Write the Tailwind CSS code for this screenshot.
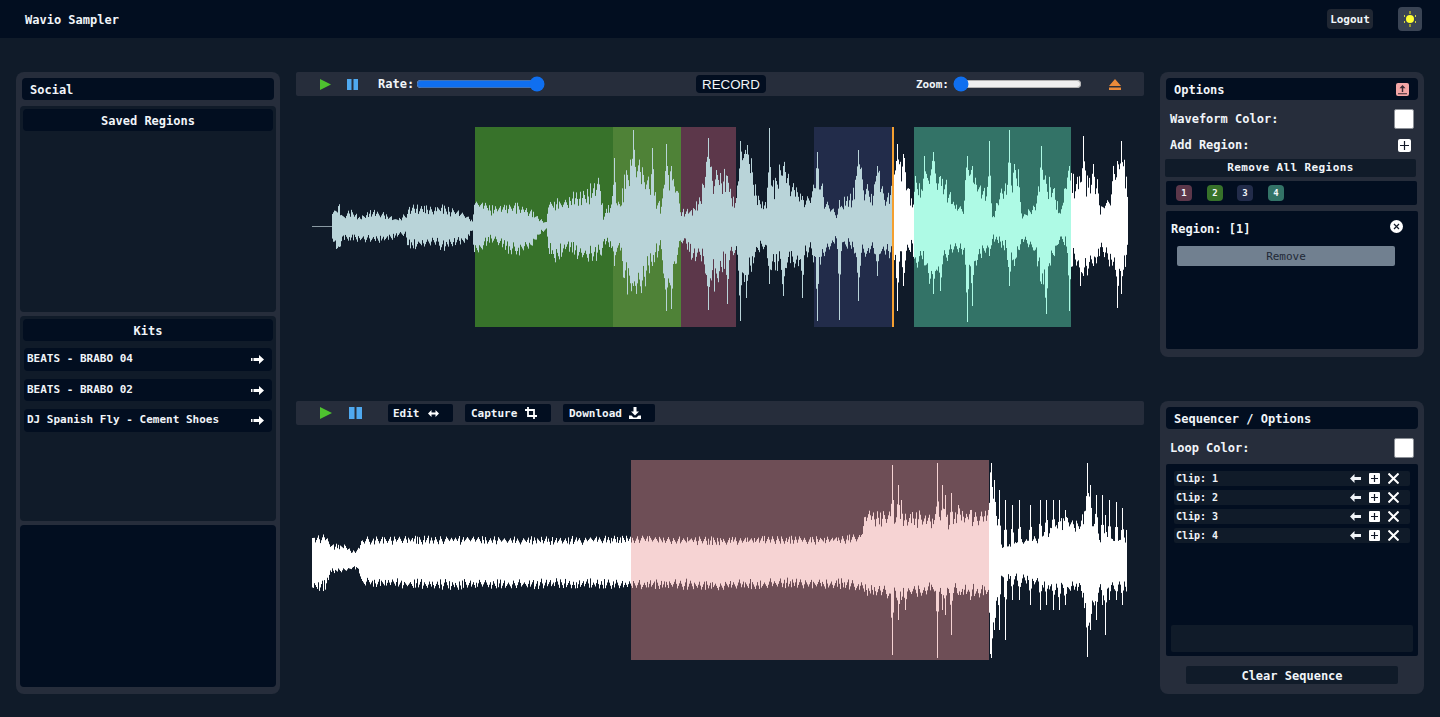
<!DOCTYPE html>
<html lang="en">
<head>
  <meta charset="UTF-8" />
  <title>Wavio Sampler</title>
  <script src="https://cdn.jsdelivr.net/npm/@tailwindcss/browser@4"></script>
</head>
<body class="h-[717px] overflow-hidden bg-[#101b29] text-[#f1f5f9] font-bold text-xs [font-family:'DejaVu_Sans_Mono',monospace]">

  <!-- Header -->
  <header class="h-[38px] bg-[#020e20] flex items-center pl-[25px] pr-[18px]">
    <span class="flex-1 pt-[2px]">Wavio Sampler</span>
    <button class="w-[46px] h-5 pt-[3px] rounded bg-[#202733] text-[11px] font-bold">Logout</button>
    <button class="ml-[25px] w-6 h-6 rounded bg-[#3a4454] flex items-center justify-center">
      <svg width="14" height="16" viewBox="0 0 14 16"><circle cx="7" cy="8" r="4" fill="#ffff33"/><path d="M7 0v3M7 13v3" stroke="#9a9a30" stroke-width="2"/><path d="M1 5h1M12 5h1M1 11h1M12 11h1" stroke="#ffff33" stroke-width="1.5"/></svg>
    </button>
  </header>

  <main class="flex gap-4 px-4 pt-[34px]">

    <!-- Left column -->
    <aside class="w-[264px] h-[622px] rounded-lg bg-[#262d3b] flex flex-col">
      <h2 class="mx-1.5 mt-1.5 h-[22px] pl-2 pt-[2px] rounded bg-[#020e20] flex items-center">Social</h2>
      <div class="mx-1 mt-1.5 h-[206px] rounded bg-[#101b29] p-[3px]">
        <h3 class="h-[22px] pt-[2px] rounded bg-[#020e20] flex items-center justify-center">Saved Regions</h3>
      </div>
      <div class="mx-1 mt-1 h-[205px] rounded bg-[#101b29] p-[3px]">
        <h3 class="h-[22px] pt-[2px] rounded bg-[#020e20] flex items-center justify-center">Kits</h3>
        <ul class="mx-px mt-[7px] text-[11px]">
          <li class="h-[23px] rounded bg-[#020e20] flex items-center justify-between pl-[3px] pr-2">
            <span>BEATS - BRABO 04</span>
            <svg width="13" height="9" viewBox="0 0 13 9" fill="#fff"><path d="M0 3h1.500v3H0zM2.500 3H8V0l5 4.500L8 9V6H2.500z"/></svg>
          </li>
          <li class="mt-2 h-[22px] rounded bg-[#020e20] flex items-center justify-between pl-[3px] pr-2">
            <span>BEATS - BRABO 02</span>
            <svg width="13" height="9" viewBox="0 0 13 9" fill="#fff"><path d="M0 3h1.500v3H0zM2.500 3H8V0l5 4.500L8 9V6H2.500z"/></svg>
          </li>
          <li class="mt-2 h-[23px] rounded bg-[#020e20] flex items-center justify-between pl-[3px] pr-2">
            <span>DJ Spanish Fly - Cement Shoes</span>
            <svg width="13" height="9" viewBox="0 0 13 9" fill="#fff"><path d="M0 3h1.500v3H0zM2.500 3H8V0l5 4.500L8 9V6H2.500z"/></svg>
          </li>
        </ul>
      </div>
      <div class="mx-1 mt-1 h-[162px] rounded bg-[#020e20]"></div>
    </aside>

    <!-- Center column -->
    <section class="w-[848px]">
      <div class="h-6 rounded-[2px] bg-[#262d3b] flex items-center">
        <svg class="ml-6" width="11" height="11" viewBox="0 0 11 11"><path d="M0 0l11 5.500L0 11z" fill="#4ec22f"/></svg>
        <svg class="ml-4" width="11" height="11" viewBox="0 0 11 11" fill="#4fa9f0"><path d="M0 0h4.500v11H0zM6.500 0H11v11H6.500z"/></svg>
        <span class="ml-5">Rate:</span>
        <input type="range" min="0" max="100" value="100" class="ml-0.5 w-[129px] h-4 accent-[#0f6ff0]" />
        <div class="flex-1 flex justify-center pl-[1px]">
          <button class="w-[70px] h-[18px] pt-[1px] rounded bg-[#020e20] text-[13.33px] font-normal [font-family:'Liberation_Sans',sans-serif]">RECORD</button>
        </div>
        <span class="pt-[3px] text-[11px]">Zoom:</span>
        <input type="range" min="0" max="100" value="0" class="ml-1 w-[129px] h-4 accent-[#0f6ff0]" />
        <svg class="ml-[27px] mr-[23px]" width="12" height="11" viewBox="0 0 12 11" fill="#e98a3a"><path d="M6 0l6 7H0zM0 8.500h12V11H0z"/></svg>
      </div>

      <div class="relative mt-[31px] h-[200px]">
        <div class="absolute inset-y-0 left-[179px] w-[138px] bg-[#37722a]"></div>
        <div class="absolute inset-y-0 left-[317px] w-[68px] bg-[#4f8237]"></div>
        <div class="absolute inset-y-0 left-[385px] w-[55px] bg-[#5c374a]"></div>
        <div class="absolute inset-y-0 left-[518px] w-[78px] bg-[#222c4a]"></div>
        <div class="absolute inset-y-0 left-[618px] w-[157px] bg-[#337367]"></div>
        <canvas id="waveTop" width="848" height="200" class="absolute inset-0"></canvas>
        <div class="absolute inset-y-0 left-[596px] w-0.5 bg-[#f5a030]"></div>
      </div>

      <div class="mt-[74px] h-6 rounded-[2px] bg-[#262d3b] flex items-center text-[11px]">
        <svg class="ml-6" width="12" height="12" viewBox="0 0 12 12"><path d="M0 0l12 6L0 12z" fill="#4ec22f"/></svg>
        <svg class="ml-[17px]" width="13" height="12" viewBox="0 0 13 12" fill="#4fa9f0"><path d="M0 0h5.500v12H0zM7.500 0H13v12H7.500z"/></svg>
        <button class="ml-[26px] w-[65px] h-[18px] rounded-[2px] bg-[#020e20] flex items-center pl-[5px] font-bold"><span class="pt-[2px]">Edit</span>
          <svg class="ml-[8px]" width="11" height="7" viewBox="0 0 11 7" fill="#fff"><path d="M0 3.500L3.500 0v2.500h4V0L11 3.500 7.500 7V4.500h-4V7z"/></svg>
        </button>
        <button class="ml-3 w-[86px] h-[18px] rounded-[2px] bg-[#020e20] flex items-center pl-1.5 font-bold"><span class="pt-[2px]">Capture</span>
          <svg class="ml-2" width="12" height="12" viewBox="0 0 12 12" fill="none" stroke="#fff" stroke-width="1.800"><path d="M3 0v9h9M0 3h9v9"/></svg>
        </button>
        <button class="ml-3 w-[92px] h-[18px] rounded-[2px] bg-[#020e20] flex items-center pl-1.5 font-bold"><span class="pt-[2px]">Download</span>
          <svg class="ml-[7px]" width="12" height="12" viewBox="0 0 12 12" fill="#fff"><path d="M4.500 0h3v4.500H10L6 8.500 2 4.500h2.500zM0 8.500h2.500L4.500 10.500h3l2-2H12V12H0z"/></svg>
        </button>
      </div>

      <div class="relative mt-[35px] h-[200px]">
        <div class="absolute inset-y-0 left-[335px] w-[358px] bg-[#6e4e56]"></div>
        <canvas id="waveBottom" width="848" height="200" class="absolute inset-0"></canvas>
      </div>
    </section>

    <!-- Right column -->
    <aside class="w-[264px]">
      <div class="h-[285px] rounded-lg bg-[#262d3b] pt-1.5 relative">
        <h2 class="mx-1.5 h-[22px] pl-2 pr-[9px] rounded bg-[#020e20] flex items-center justify-between"><span class="pt-[2px]">Options</span>
          <svg width="13" height="13" viewBox="0 0 13 13"><rect width="13" height="13" rx="2" fill="#f4a6a6"/><path d="M6.500 2l3 3.300H7.200V9H5.800V5.300H3.500zM2 10.200h9v1.100H2z" fill="#3b2a33"/></svg>
        </h2>
        <div class="h-[26px] mt-[6px] px-2.5 flex items-center justify-between">
          <span>Waveform Color:</span>
          <span class="w-5 h-5 rounded-[2px] bg-white border border-[#8b8f96]"></span>
        </div>
        <div class="h-[26px] pl-2.5 pr-[13px] flex items-center justify-between">
          <span>Add Region:</span>
          <span class="w-[13px] h-[13px] rounded-[2px] bg-white flex items-center justify-center">
            <svg width="9" height="9" viewBox="0 0 9 9" stroke="#111827" stroke-width="1.200"><path d="M4.500 0v9M0 4.500h9"/></svg>
          </span>
        </div>
        <button class="block ml-[5px] mt-[1px] w-[251px] h-[18px] rounded-[2px] bg-[#101b29] text-[11px] tracking-[0.4px] font-bold">Remove All Regions</button>
        <div class="mx-1.5 mt-1 w-[251px] h-6 rounded-[2px] bg-[#020e20] flex items-center pl-2.5 text-[9px]">
          <span class="w-4 h-4 rounded bg-[#5c374a] flex items-center justify-center">1</span>
          <span class="ml-[15px] w-4 h-4 rounded bg-[#37722a] flex items-center justify-center">2</span>
          <span class="ml-3.5 w-4 h-4 rounded bg-[#222c4a] flex items-center justify-center">3</span>
          <span class="ml-[15px] w-4 h-4 rounded bg-[#337367] flex items-center justify-center">4</span>
        </div>
        <div class="mx-1.5 mt-1.5 h-[138px] rounded-[2px] bg-[#020e20] pt-[9px]">
          <div class="pl-[5px] pr-[15px] h-[17px] flex items-center justify-between">
            <span>Region: [1]</span>
            <svg class="-mt-1" width="13" height="13" viewBox="0 0 13 13"><circle cx="6.500" cy="6.500" r="6.500" fill="#fff"/><path d="M4 4l5 5M9 4l-5 5" stroke="#111827" stroke-width="1.200"/></svg>
          </div>
          <button class="block ml-[11px] mt-[9px] w-[218px] h-5 pt-[2px] rounded-[2px] bg-[#718090] text-[#1f2937] text-[11px] font-normal">Remove</button>
        </div>
      </div>

      <div class="mt-[44px] h-[293px] rounded-lg bg-[#262d3b] pt-1.5">
        <h2 class="mx-1.5 h-[22px] pl-2 pt-[2px] rounded bg-[#020e20] flex items-center">Sequencer / Options</h2>
        <div class="h-[26px] mt-[6px] px-2.5 flex items-center justify-between">
          <span>Loop Color:</span>
          <span class="w-5 h-5 rounded-[2px] bg-white border border-[#8b8f96]"></span>
        </div>
        <div class="mx-1.5 mt-[3px] h-[192px] rounded-[2px] bg-[#020e20] relative">
          <ul class="pt-[7px] px-2 flex flex-col gap-1 text-[10px]">
            <li class="h-[15px] rounded-[2px] bg-[#101b29] flex items-center pl-0.5 pr-[11px]">
              <span class="flex-1">Clip: 1</span>
              <svg width="11" height="9" viewBox="0 0 11 9" fill="#f1f5f9"><path d="M0 4.500L4.500 0v3H11v3H4.500v3z"/></svg>
              <span class="ml-2 w-[11px] h-[11px] rounded-[1px] bg-white flex items-center justify-center"><svg width="7" height="7" viewBox="0 0 7 7" stroke="#111827" stroke-width="1.200"><path d="M3.500 0v7M0 3.500h7"/></svg></span>
              <svg class="ml-2" width="11" height="11" viewBox="0 0 11 11" stroke="#fff" stroke-width="2"><path d="M.5.500l10 10M10.500.500l-10 10"/></svg>
            </li>
            <li class="h-[15px] rounded-[2px] bg-[#101b29] flex items-center pl-0.5 pr-[11px]">
              <span class="flex-1">Clip: 2</span>
              <svg width="11" height="9" viewBox="0 0 11 9" fill="#f1f5f9"><path d="M0 4.500L4.500 0v3H11v3H4.500v3z"/></svg>
              <span class="ml-2 w-[11px] h-[11px] rounded-[1px] bg-white flex items-center justify-center"><svg width="7" height="7" viewBox="0 0 7 7" stroke="#111827" stroke-width="1.200"><path d="M3.500 0v7M0 3.500h7"/></svg></span>
              <svg class="ml-2" width="11" height="11" viewBox="0 0 11 11" stroke="#fff" stroke-width="2"><path d="M.5.500l10 10M10.500.500l-10 10"/></svg>
            </li>
            <li class="h-[15px] rounded-[2px] bg-[#101b29] flex items-center pl-0.5 pr-[11px]">
              <span class="flex-1">Clip: 3</span>
              <svg width="11" height="9" viewBox="0 0 11 9" fill="#f1f5f9"><path d="M0 4.500L4.500 0v3H11v3H4.500v3z"/></svg>
              <span class="ml-2 w-[11px] h-[11px] rounded-[1px] bg-white flex items-center justify-center"><svg width="7" height="7" viewBox="0 0 7 7" stroke="#111827" stroke-width="1.200"><path d="M3.500 0v7M0 3.500h7"/></svg></span>
              <svg class="ml-2" width="11" height="11" viewBox="0 0 11 11" stroke="#fff" stroke-width="2"><path d="M.5.500l10 10M10.500.500l-10 10"/></svg>
            </li>
            <li class="h-[15px] rounded-[2px] bg-[#101b29] flex items-center pl-0.5 pr-[11px]">
              <span class="flex-1">Clip: 4</span>
              <svg width="11" height="9" viewBox="0 0 11 9" fill="#f1f5f9"><path d="M0 4.500L4.500 0v3H11v3H4.500v3z"/></svg>
              <span class="ml-2 w-[11px] h-[11px] rounded-[1px] bg-white flex items-center justify-center"><svg width="7" height="7" viewBox="0 0 7 7" stroke="#111827" stroke-width="1.200"><path d="M3.500 0v7M0 3.500h7"/></svg></span>
              <svg class="ml-2" width="11" height="11" viewBox="0 0 11 11" stroke="#fff" stroke-width="2"><path d="M.5.500l10 10M10.500.500l-10 10"/></svg>
            </li>
          </ul>
          <div class="absolute left-[5px] right-[5px] bottom-1 h-[27px] rounded-[2px] bg-[#101b29]"></div>
        </div>
        <button class="block mx-auto mt-2.5 w-[212px] h-[18px] pt-[2px] rounded-[2px] bg-[#101b29] font-bold">Clear Sequence</button>
      </div>
    </aside>
  </main>

  <script>
    // envelope points are [page x, amp up, amp down], spikes the same but narrow
    const topEnv = [[332,12,12],[338,22,26],[342,10,12],[350,15,14],[360,8,14],[370,15,15],[385,12,14],[395,6,11],[405,11,8],[408,18,23],[420,19,18],[435,18,18],[442,19,23],[455,15,17],[465,12,16],[472,5,5],[474,25,30],[480,23,23],[490,18,14],[500,18,20],[510,21,25],[515,21,28],[530,15,21],[540,7,7],[546,4,4],[548,23,23],[555,24,34],[565,24,22],[575,32,28],[585,34,30],[595,42,34],[600,42,30],[603,10,18],[610,22,19],[620,24,22],[624,44,56],[632,62,66],[642,56,66],[652,38,36],[660,20,22],[665,42,60],[675,46,40],[680,18,18],[684,15,14],[692,15,32],[700,30,29],[708,68,50],[715,48,60],[725,52,36],[733,26,26],[736,30,34],[742,78,50],[750,68,42],[757,28,26],[765,22,22],[770,36,36],[782,62,42],[790,44,36],[798,34,36],[804,24,26],[810,28,28],[817,54,38],[825,26,28],[833,16,18],[838,9,13],[845,28,20],[852,28,20],[858,58,32],[864,44,28],[872,28,26],[877,54,26],[885,30,26],[893,38,30],[897,64,32],[905,56,32],[912,20,20],[915,44,44],[922,34,30],[930,62,58],[938,44,40],[947,40,34],[952,24,24],[963,16,26],[967,58,42],[977,42,34],[984,34,26],[990,24,18],[993,9,14],[1000,34,18],[1010,40,30],[1018,52,26],[1022,10,14],[1033,18,22],[1042,54,58],[1053,38,30],[1060,12,12],[1067,50,20],[1071,46,34],[1085,50,44],[1097,42,34],[1100,18,24],[1110,28,36],[1113,56,38],[1125,58,40],[1128,24,24]];
    const topSpikes = [[614,68,40],[633,96,60],[652,78,40],[666,82,85],[671,60,83],[708,88,84],[727,50,78],[740,85,95],[746,72,72],[769,98,58],[783,60,70],[802,30,72],[817,74,95],[839,26,94],[858,76,75],[877,60,50],[897,82,85],[903,72,60],[924,70,30],[933,74,68],[940,50,65],[967,70,96],[972,60,80],[989,85,30],[1009,96,60],[1014,62,40],[1041,80,58],[1046,30,88],[1069,60,85],[1080,40,60],[1083,90,50],[1093,62,40],[1117,65,82],[1121,85,68]];
    const bottomEnv = [[312,22,27],[325,23,28],[330,15,12],[345,14,11],[352,8,8],[358,12,9],[362,21,24],[450,22,27],[500,21,26],[631,22,26],[720,21,27],[790,22,25],[840,22,26],[860,24,28],[865,46,32],[880,46,34],[890,46,36],[900,40,34],[920,46,34],[935,40,28],[950,40,28],[960,46,34],[975,46,34],[988,46,34],[990,80,90],[1000,14,16],[1012,16,18],[1045,26,26],[1065,40,30],[1080,36,29],[1087,58,58],[1100,20,26],[1127,20,26]];
    const bottomSpikes = [[892,95,95],[898,75,60],[901,60,40],[905,40,50],[937,97,98],[942,75,50],[945,65,55],[951,67,75],[958,55,35],[970,50,40],[991,97,98],[994,80,70],[999,70,70],[1005,60,80],[1012,55,40],[1019,60,40],[1030,55,45],[1040,60,50],[1046,60,45],[1053,60,50],[1059,60,50],[1065,50,45],[1087,97,97],[1090,75,70],[1096,65,60],[1102,65,45],[1105,45,75],[1109,60,40],[1116,58,40],[1122,52,45],[1127,50,45]];

    function envAt(points, x, i) {
      for (let p = 1; p < points.length; p++) {
        if (x <= points[p][0]) {
          const a = points[p - 1], b = points[p];
          return a[i] + (b[i] - a[i]) * (x - a[0]) / (b[0] - a[0]);
        }
      }
      return points[points.length - 1][i];
    }

    // saw-tooth noise: a peak, then a valley, a few pixels apart
    function makeNoise(rand, length, depth) {
      const out = [];
      let from = 1, to = 1, left = 0, run = 1, rising = false;
      for (let i = 0; i < length; i++) {
        if (left <= 0) {
          from = to;
          rising = !rising;
          to = rising ? 1 + depth * 0.4 * rand() : 1 - depth * (0.4 + 0.6 * rand());
          run = left = 1 + Math.floor(rand() * 3);
        }
        left--;
        out.push(to + (from - to) * left / run);
      }
      return out;
    }

    function drawWave(id, points, spikes, centerY, colorAt, seed, depth, spikeWidth) {
      const ctx = document.getElementById(id).getContext("2d");
      let s = seed;
      const rand = () => (s = (s * 16807) % 2147483647) / 2147483647;
      const first = points[0][0], last = points[points.length - 1][0];
      const upNoise = makeNoise(rand, last - first, depth);
      const downNoise = makeNoise(rand, last - first, depth);
      for (let x = first; x < last; x++) {
        let up = envAt(points, x, 1) * upNoise[x - first];
        let down = envAt(points, x, 2) * downNoise[x - first];
        for (const sp of spikes) {
          const f = 1 - Math.abs(x - sp[0]) / spikeWidth;
          if (f > 0) {
            up = Math.max(up, up + (sp[1] - up) * f * f);
            down = Math.max(down, down + (sp[2] - down) * f * f);
          }
        }
        ctx.fillStyle = colorAt(x);
        ctx.fillRect(x - 296, centerY - up, 1, up + down);
      }
    }

    const topColor = x => x < 893 ? "#b9d4d9" : (x >= 914 && x < 1071 ? "#aefae5" : "#ffffff");
    const bottomColor = x => x >= 631 && x < 989 ? "#f6d3d3" : "#ffffff";

    drawWave("waveTop", topEnv, topSpikes, 99, topColor, 4711, 0.42, 3);
    drawWave("waveBottom", bottomEnv, bottomSpikes, 100, bottomColor, 1291, 0.3, 2.5);

    // lead-in before the first sample of the top wave
    const lead = document.getElementById("waveTop").getContext("2d");
    lead.fillStyle = "#8a9aa3";
    lead.fillRect(16, 99, 20, 1);
  </script>
</body>
</html>
